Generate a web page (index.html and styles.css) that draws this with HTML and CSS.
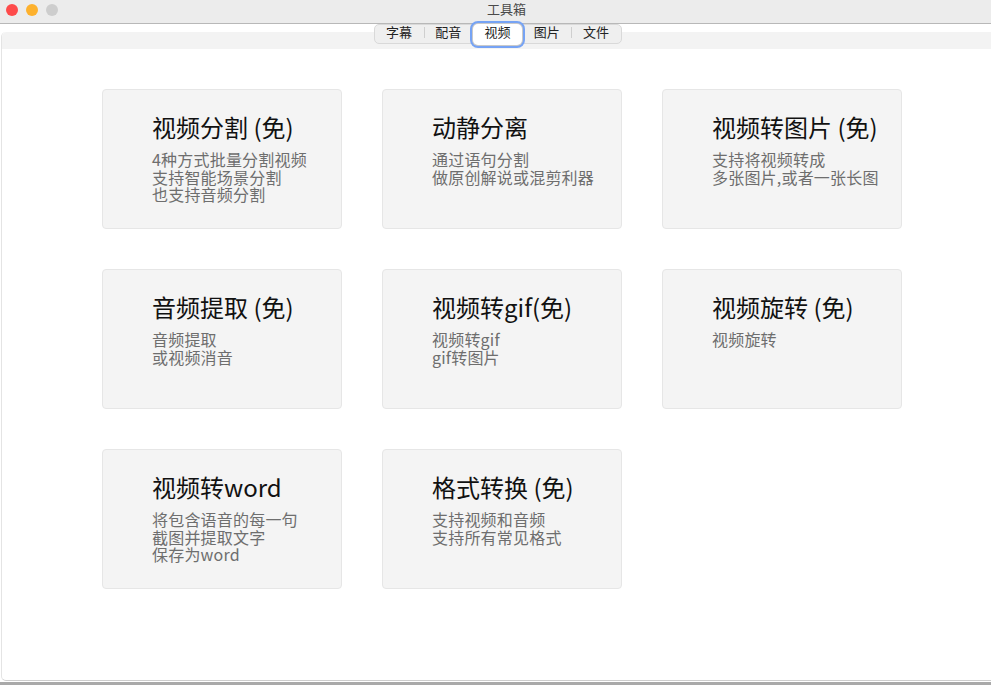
FILE: index.html
```html
<!DOCTYPE html>
<html lang="zh">
<head>
<meta charset="utf-8">
<title>工具箱</title>
<link rel="stylesheet" href="styles.css">
</head>
<body>
<div class="window">
  <div class="titlebar">
    <div class="lights">
      <span class="light red"></span>
      <span class="light yellow"></span>
      <span class="light gray"></span>
    </div>
    <div class="wtitle">工具箱</div>
  </div>
  <div class="main">
    <div class="panel">
      <div class="band">
        <div class="seg">
          <div class="tab">字幕</div>
          <div class="tab sep">配音</div>
          <div class="tab active">视频</div>
          <div class="tab">图片</div>
          <div class="tab sep">文件</div>
        </div>
      </div>
      <div class="content">
        <div class="grid">
          <div class="card">
            <div class="ctitle">视频分割 (免)</div>
            <div class="cdesc">4种方式批量分割视频<br>支持智能场景分割<br>也支持音频分割</div>
          </div>
          <div class="card">
            <div class="ctitle">动静分离</div>
            <div class="cdesc">通过语句分割<br>做原创解说或混剪利器</div>
          </div>
          <div class="card">
            <div class="ctitle">视频转图片 (免)</div>
            <div class="cdesc">支持将视频转成<br>多张图片,或者一张长图</div>
          </div>
          <div class="card">
            <div class="ctitle">音频提取 (免)</div>
            <div class="cdesc">音频提取<br>或视频消音</div>
          </div>
          <div class="card">
            <div class="ctitle">视频转gif(免)</div>
            <div class="cdesc">视频转gif<br>gif转图片</div>
          </div>
          <div class="card">
            <div class="ctitle">视频旋转 (免)</div>
            <div class="cdesc">视频旋转</div>
          </div>
          <div class="card">
            <div class="ctitle">视频转word</div>
            <div class="cdesc">将包含语音的每一句<br>截图并提取文字<br>保存为word</div>
          </div>
          <div class="card">
            <div class="ctitle">格式转换 (免)</div>
            <div class="cdesc">支持视频和音频<br>支持所有常见格式</div>
          </div>
        </div>
      </div>
    </div>
  </div>
</div>
</body>
</html>
```
FILE: styles.css
```css
* { box-sizing: border-box; }
html, body {
  margin: 0;
  padding: 0;
}
body {
  width: 991px;
  height: 685px;
  overflow: hidden;
  background: #a9a9a9;
  font-family: "Noto Sans CJK SC", "Noto Sans", sans-serif;
}
.window {
  width: 991px;
  height: 682px;
  display: flex;
  flex-direction: column;
  background: #ffffff;
}
.titlebar {
  height: 24px;
  flex: none;
  background: #ececec;
  border-bottom: 1px solid #b8b8b8;
  display: flex;
  align-items: center;
  padding-bottom: 6px;
}
.lights {
  display: flex;
  gap: 8px;
  padding-left: 6px;
  margin-top: 2px;
}
.light {
  width: 12px;
  height: 12px;
  border-radius: 50%;
  display: block;
}
.light.red { background: #fe4b4b; }
.light.yellow { background: #fdb12d; }
.light.gray { background: #cdcdcd; }
.wtitle {
  margin-left: 429px;
  font-size: 13px;
  line-height: 16px;
  color: #4a4a4a;
}
.main {
  flex: 1;
  display: flex;
  flex-direction: column;
  padding-top: 8px;
}
.panel {
  flex: 1;
  margin-left: 1px;
  margin-bottom: 1px;
  border-left: 1px solid #e4e4e4;
  border-bottom: 1px solid #cdcdcd;
  border-radius: 5px 0 0 5px;
  display: flex;
  flex-direction: column;
  background: #ffffff;
}
.band {
  height: 17px;
  flex: none;
  background: #f3f3f3;
  border-radius: 5px 0 0 0;
  display: flex;
  justify-content: center;
  padding-left: 2px;
}
.seg {
  margin-top: -8px;
  width: 248px;
  height: 20px;
  display: flex;
  align-items: center;
  background: #efefef;
  border: 1px solid #d9d9d9;
  border-radius: 5px;
}
.tab {
  flex: 1;
  height: 20px;
  display: flex;
  align-items: center;
  justify-content: center;
  font-size: 13px;
  line-height: 14px;
  padding-bottom: 4px;
  color: #222222;
  position: relative;
}
.tab.sep::before {
  content: "";
  position: absolute;
  left: 0;
  top: 3px;
  height: 11px;
  border-left: 1px solid #cfcfcf;
}
.tab.active {
  background: #ffffff;
  border-radius: 5px;
  height: 21px;
  box-shadow: 0 0 0 1px #c9c9c9, 0 0 0 3px #76a3f4;
}
.content {
  flex: 1;
  padding: 40px 0 0 100px;
}
.grid {
  display: grid;
  grid-template-columns: repeat(3, 240px);
  grid-auto-rows: 140px;
  gap: 40px;
}
.card {
  background: #f4f4f4;
  border: 1px solid #e6e6e6;
  border-radius: 4px;
  padding: 22px 0 0 49px;
}
.ctitle {
  font-size: 24px;
  line-height: 30px;
  color: #111111;
  margin-bottom: 9px;
}
.cdesc {
  font-size: 16px;
  line-height: 17.5px;
  letter-spacing: 0.2px;
  color: #6e6e6e;
}
```
